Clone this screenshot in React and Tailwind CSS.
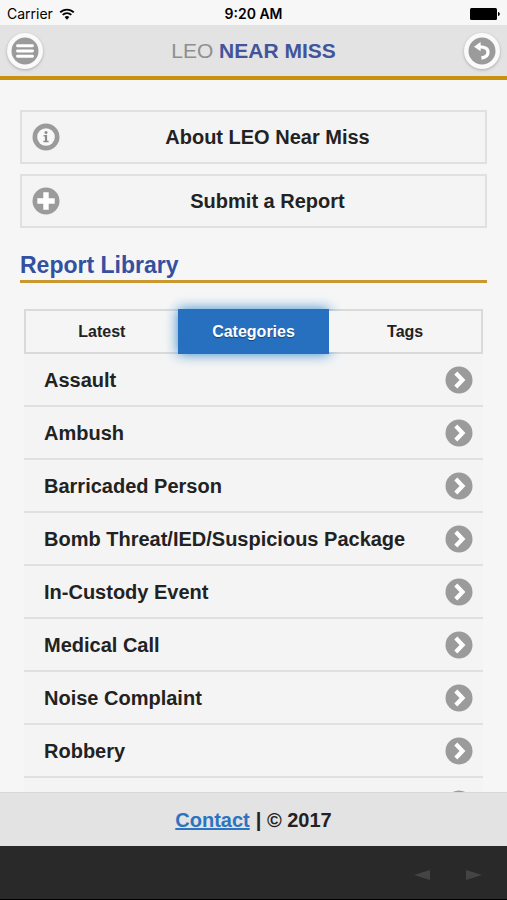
const categories = [
  'Assault',
  'Ambush',
  'Barricaded Person',
  'Bomb Threat/IED/Suspicious Package',
  'In-Custody Event',
  'Medical Call',
  'Noise Complaint',
  'Robbery',
];

const tabs = ['Latest', 'Categories', 'Tags'];

function IconDisc({ children }) {
  return (
    <svg viewBox="0 0 28 28" className="w-7 h-7 shrink-0" aria-hidden="true">
      <circle cx="14" cy="14" r="13.5" fill="#9b9b9b" />
      {children}
    </svg>
  );
}

function InfoIcon() {
  return (
    <IconDisc>
      <circle cx="14" cy="14" r="8.8" fill="#f8f8f8" />
      <circle cx="14" cy="9.5" r="1.5" fill="#8c8c8c" />
      <path d="M11.6 12H15.1V17.8H16.6V19.3H11.4V17.8H12.9V13.5H11.6Z" fill="#8c8c8c" />
    </IconDisc>
  );
}

function PlusIcon() {
  return (
    <IconDisc>
      <path d="M11.3 5.3H16.7V11.3H22.7V16.7H16.7V22.7H11.3V16.7H5.3V11.3H11.3Z" fill="#fff" />
    </IconDisc>
  );
}

function ChevronIcon() {
  return (
    <IconDisc>
      <path d="M10.8 7L17.5 14L10.8 21" fill="none" stroke="#fff" strokeWidth="4.2" />
    </IconDisc>
  );
}

function MenuIcon() {
  return (
    <IconDisc>
      <path d="M6.5 8.8H21.5M6.5 14H21.5M6.5 19.2H21.5" stroke="#fff" strokeWidth="2.9" strokeLinecap="round" />
    </IconDisc>
  );
}

function BackIcon() {
  return (
    <IconDisc>
      <path d="M6 9.8L12.6 5L12.6 14.2Z" fill="#fff" />
      <path d="M11 9.9C17 9.6 20 11.8 20 15.2C20 18.6 17.4 20.4 13.4 21" fill="none" stroke="#fff" strokeWidth="3.3" />
    </IconDisc>
  );
}

function RoundButton({ label, children }) {
  return (
    <button type="button" aria-label={label} className="w-9 h-9 rounded-full bg-[#fafafa] flex items-center justify-center shadow-[0_1px_3px_#aaa]">
      {children}
    </button>
  );
}

function StatusBar() {
  return (
    <div className="h-[25px] shrink-0 grid grid-cols-3 items-center px-[7px] pt-[3px] bg-[#f7f7f7] text-black text-sm leading-5 font-[Inter,sans-serif]">
      <div className="flex items-center gap-1.5">
        <span>Carrier</span>
        <svg viewBox="0 0 16 12" className="w-4 h-3" aria-hidden="true">
          <path d="M1.2 4.4A9.6 9.6 0 0 1 14.8 4.4" fill="none" stroke="#000" strokeWidth="1.9" />
          <path d="M3.7 6.9A6 6 0 0 1 12.3 6.9" fill="none" stroke="#000" strokeWidth="1.9" />
          <path d="M5.6 9.1A3.4 3.4 0 0 1 10.4 9.1L8 11.7Z" fill="#000" />
        </svg>
      </div>
      <span className="text-center font-semibold">9:20 AM</span>
      <svg viewBox="0 0 30 12" className="w-[30px] h-3 justify-self-end" aria-hidden="true">
        <rect x="0" y="0" width="27" height="12" rx="1.5" fill="#000" />
        <path d="M28 4C30.4 4.4 30.4 7.6 28 8Z" fill="#000" />
      </svg>
    </div>
  );
}

function ActionButton({ icon, children }) {
  return (
    <button type="button" className="w-full h-[54px] flex items-center px-[10px] bg-[#f4f4f4] border-2 border-[#e0e0e0] text-xl font-bold">
      {icon}
      <span className="flex-1 text-center">{children}</span>
    </button>
  );
}

function CategoryRow({ name, label }) {
  return (
    <li>
      <a
        href="#"
        aria-label={label}
        className="h-[53px] flex items-center justify-between pl-5 pr-[10px] bg-[#f4f4f4] border-b-2 border-[#e0e0e0] text-xl font-bold"
      >
        <span>{name}</span>
        <ChevronIcon />
      </a>
    </li>
  );
}

export default function App() {
  return (
    <div className="h-screen flex flex-col bg-[#f6f6f6] text-[#222] font-['Liberation_Sans',Arial,sans-serif]">
      <StatusBar />

      <header className="h-[55px] shrink-0 flex items-center justify-between px-[7px] bg-[#e3e3e3] border-b-4 border-[#c8920f]">
        <RoundButton label="Menu">
          <MenuIcon />
        </RoundButton>
        <h1 className="text-[21px] leading-6 text-[#8f8f8f]">
          LEO <span className="font-bold text-[#42549b]">NEAR MISS</span>
        </h1>
        <RoundButton label="Back">
          <BackIcon />
        </RoundButton>
      </header>

      <main className="flex-1 min-h-0 overflow-y-auto [scrollbar-width:none] px-5 pt-[30px]">
        <div className="flex flex-col gap-[10px]">
          <ActionButton icon={<InfoIcon />}>About LEO Near Miss</ActionButton>
          <ActionButton icon={<PlusIcon />}>Submit a Report</ActionButton>
        </div>

        <h2 className="mt-[23px] pb-px text-[23px] leading-7 font-bold text-[#3450a0] border-b-3 border-[#c9982f]">
          Report Library
        </h2>

        <section className="mt-[26px] px-1">
          <div role="tablist" className="h-[45px] flex border-2 border-[#dadada]">
            {tabs.map((tab) => (
              <button
                key={tab}
                type="button"
                role="tab"
                aria-selected={tab === 'Categories'}
                className={
                  tab === 'Categories'
                    ? 'flex-1 -my-0.5 text-base font-bold text-white bg-[#2770c0] shadow-[0_0_12px_#3388cc] [text-shadow:0_1px_1px_#114477]'
                    : 'flex-1 text-base font-bold bg-[#f5f5f5]'
                }
              >
                {tab}
              </button>
            ))}
          </div>
          <ul>
            {categories.map((name) => (
              <CategoryRow key={name} name={name} />
            ))}
            <CategoryRow label="More categories" />
          </ul>
        </section>
      </main>

      <footer className="h-[54px] shrink-0 flex items-center justify-center gap-1.5 bg-[#e3e3e3] border-t border-[#d8d8d8] text-xl font-bold">
        <a href="#" className="text-[#2d73c0] underline">Contact</a>
        <span>| © 2017</span>
      </footer>

      <nav className="h-[54px] shrink-0 flex items-center justify-end gap-9 px-[25px] pt-1 bg-[#292929] border-b border-black">
        <button type="button" aria-label="Previous page">
          <svg viewBox="0 0 16 10" className="w-4 h-[10px]">
            <path d="M0 5L16 0V10Z" fill="#444" />
          </svg>
        </button>
        <button type="button" aria-label="Next page">
          <svg viewBox="0 0 16 10" className="w-4 h-[10px]">
            <path d="M16 5L0 0V10Z" fill="#444" />
          </svg>
        </button>
      </nav>
    </div>
  );
}
